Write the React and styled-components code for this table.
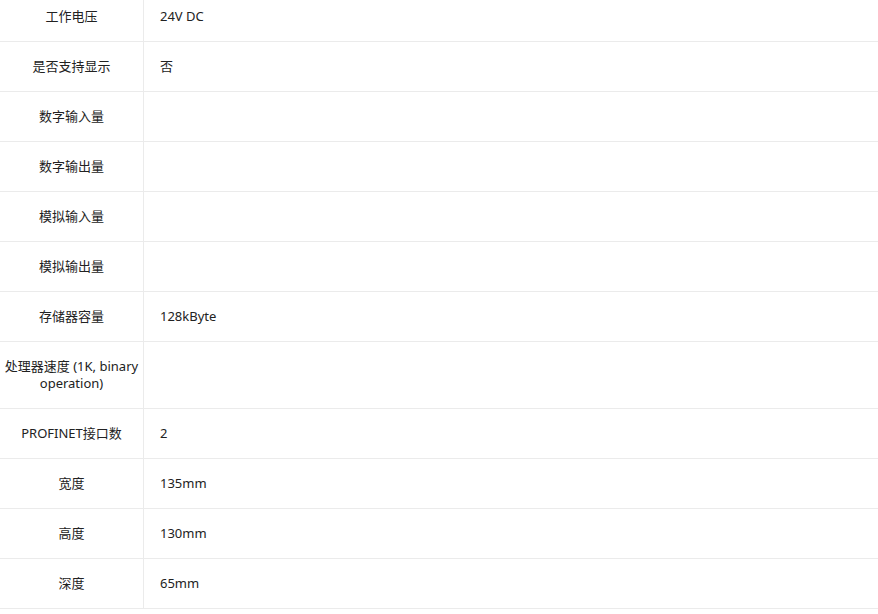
import * as React from "react";
import styled, { createGlobalStyle } from "styled-components";

const GlobalStyle = createGlobalStyle`
  html, body {
    margin: 0;
    padding: 0;
    background: #fff;
    overflow: hidden;
  }
  body {
    font-family: "Noto Sans", "Noto Sans CJK SC", sans-serif;
    color: #222;
  }
`;

const Page = styled.div`
  width: 878px;
  height: 614px;
  overflow: hidden;
`;

const Table = styled.table`
  width: 100%;
  border-collapse: collapse;
  margin-top: -8px;
  font-size: 13px;
  line-height: 17px;
`;

const Row = styled.tr`
  border-bottom: 1px solid #ebebeb;
`;

const LabelCell = styled.td`
  width: 135px;
  padding: 16px 4px;
  text-align: center;
  vertical-align: middle;
  border-right: 1px solid #ebebeb;
  color: #222;
`;

const ValueCell = styled.td`
  padding: 16px 16px;
  text-align: left;
  vertical-align: middle;
  color: #222;
`;

const specs = [
  ["工作电压", "24V DC"],
  ["是否支持显示", "否"],
  ["数字输入量", ""],
  ["数字输出量", ""],
  ["模拟输入量", ""],
  ["模拟输出量", ""],
  ["存储器容量", "128kByte"],
  ["处理器速度 (1K, binary operation)", ""],
  ["PROFINET接口数", "2"],
  ["宽度", "135mm"],
  ["高度", "130mm"],
  ["深度", "65mm"],
];

export default function App() {
  return (
    <Page>
      <GlobalStyle />
      <Table>
        <tbody>
          {specs.map(([label, value]) => (
            <Row key={label}>
              <LabelCell>{label}</LabelCell>
              <ValueCell>{value}</ValueCell>
            </Row>
          ))}
        </tbody>
      </Table>
    </Page>
  );
}
